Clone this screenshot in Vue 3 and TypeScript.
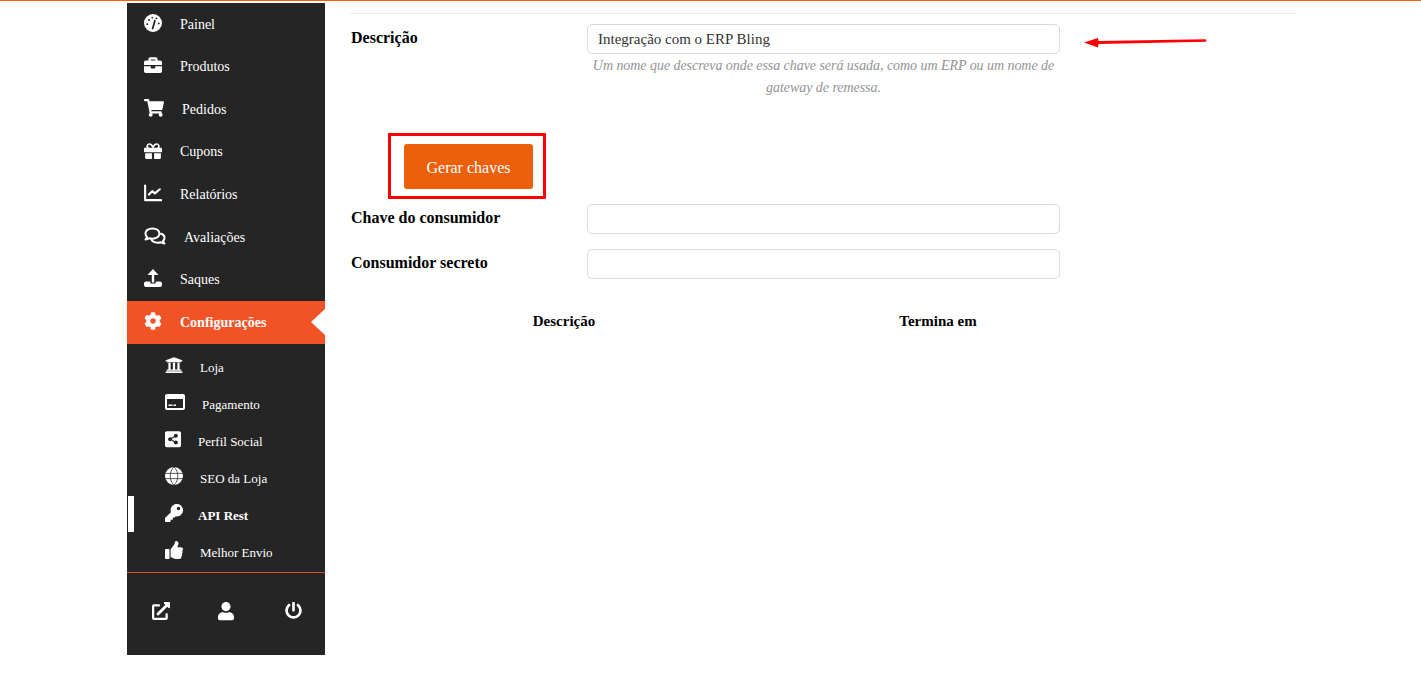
<script setup lang="ts">
interface Glyph {
  vb: string
  w: number
  d?: string
  cut?: string
  line?: string
}

interface NavItem {
  label: string
  shift?: number
  active?: boolean
  glyph: Glyph
}

const mainItems: NavItem[] = [
  {
    label: 'Painel',
    glyph: {
      vb: '0 0 24 24',
      w: 18,
      d: 'M12 0a12 12 0 1 0 0 24a12 12 0 1 0 0-24z',
      cut: 'M11.500 19.500L14.500 9M4.400 13.600h.1M6.600 8h.1M11 4.800h.1M16.400 5.800h.1M19.600 12.600h.1',
    },
  },
  {
    label: 'Produtos',
    glyph: {
      vb: '0 0 512 512',
      w: 18,
      d: 'M320 336c0 8.840-7.160 16-16 16h-96c-8.840 0-16-7.160-16-16v-48H0v144c0 25.600 22.400 48 48 48h416c25.600 0 48-22.400 48-48V288H320v48zm144-208h-80V80c0-25.600-22.400-48-48-48H176c-25.600 0-48 22.400-48 48v48H48c-25.600 0-48 22.400-48 48v80h512v-80c0-25.600-22.400-48-48-48zm-144 0H192V96h128v32z',
    },
  },
  {
    label: 'Pedidos',
    shift: 2,
    glyph: {
      vb: '0 0 576 512',
      w: 20,
      d: 'M528.120 301.319l47.273-208C578.806 78.301 567.391 64 551.990 64H159.208l-9.166-44.810C147.758 8.021 137.930 0 126.529 0H24C10.745 0 0 10.745 0 24v16c0 13.255 10.745 24 24 24h69.883l70.248 343.435C147.325 417.100 136 435.222 136 456c0 30.928 25.072 56 56 56s56-25.072 56-56c0-15.674-6.447-29.835-16.824-40h209.647C430.447 426.165 424 440.326 424 456c0 30.928 25.072 56 56 56s56-25.072 56-56c0-22.172-12.888-41.332-31.579-50.405l5.517-24.276c3.413-15.018-8.002-29.319-23.403-29.319H218.117l-6.545-32h293.145c11.206 0 20.920-7.754 23.403-18.681z',
    },
  },
  {
    label: 'Cupons',
    glyph: {
      vb: '0 0 512 512',
      w: 18,
      d: 'M32 448c0 17.700 14.300 32 32 32h160V320H32v128zm256 32h160c17.700 0 32-14.300 32-32V320H288v160zm192-320h-42.100c6.200-12.100 10.100-25.500 10.100-40 0-48.500-39.500-88-88-88-41.600 0-68.500 21.300-103 68.300-34.500-47-61.400-68.300-103-68.300-48.500 0-88 39.500-88 88 0 14.500 3.800 27.900 10.100 40H32c-17.700 0-32 14.300-32 32v80c0 8.800 7.200 16 16 16h480c8.800 0 16-7.200 16-16v-80c0-17.700-14.300-32-32-32zm-326.100 0c-22.100 0-40-17.900-40-40s17.900-40 40-40c19.900 0 34.600 3.300 86.100 80h-86.100zm206.100 0h-86.100c51.400-76.500 65.700-80 86.100-80 22.100 0 40 17.900 40 40s-17.900 40-40 40z',
    },
  },
  {
    label: 'Relatórios',
    glyph: {
      vb: '0 0 24 24',
      w: 18,
      line: 'M1.500 2v19.500H23M6.500 14l4.500-4.500 3.500 3L21 7',
    },
  },
  {
    label: 'Avaliações',
    shift: 4,
    glyph: {
      vb: '0 0 30 24',
      w: 22,
      line: 'M11.500 2C6 2 2 5 2 9c0 1.800.8 3.400 2.100 4.700-.3 1.300-1 2.400-2 3.300 1.900-.1 3.600-.8 4.800-1.700 1.400.5 3 .7 4.600.7 5.500 0 9.500-3 9.500-7S17 2 11.500 2zM23.500 9.200c2.800 1 4.500 3 4.500 5.500 0 1.700-.8 3.200-2.100 4.400.2 1.300.9 2.500 1.900 3.400-1.900-.1-3.600-.8-4.800-1.700-1.400.5-3 .7-4.600.7-3.300 0-6-1.100-7.600-2.900',
    },
  },
  {
    label: 'Saques',
    glyph: {
      vb: '0 0 18 18',
      w: 18,
      d: 'M9 0l5.500 6h-4.300v7.500H7.800V6H3.500zM2 12.500h4.200v1c0 .6.5 1.100 1.100 1.100h3.400c.6 0 1.100-.5 1.100-1.100v-1H16c1.100 0 2 .9 2 2V16c0 1.100-.9 2-2 2H2c-1.100 0-2-.9-2-2v-1.500c0-1.100.9-2 2-2z',
    },
  },
  {
    label: 'Configurações',
    active: true,
    glyph: {
      vb: '0 0 512 512',
      w: 18,
      d: 'M487.400 315.700l-42.600-24.600c4.300-23.200 4.300-47 0-70.200l42.600-24.600c4.900-2.800 7.100-8.600 5.500-14-11.100-35.600-30-67.800-54.700-94.600-3.800-4.100-10-5.100-14.800-2.300L380.800 110c-17.900-15.400-38.500-27.300-60.800-35.100V25.800c0-5.600-3.900-10.500-9.400-11.700-36.700-8.200-74.300-7.800-109.200 0-5.500 1.200-9.400 6.100-9.400 11.700V75c-22.200 7.900-42.800 19.800-60.800 35.100L88.700 85.500c-4.900-2.800-11-1.900-14.800 2.300-24.700 26.700-43.600 58.900-54.700 94.600-1.700 5.400.6 11.200 5.500 14L67.300 221c-4.300 23.200-4.300 47 0 70.200l-42.600 24.600c-4.900 2.800-7.100 8.600-5.500 14 11.100 35.600 30 67.800 54.700 94.600 3.800 4.100 10 5.100 14.800 2.300l42.600-24.600c17.900 15.400 38.500 27.300 60.800 35.100v49.200c0 5.600 3.900 10.500 9.400 11.700 36.700 8.200 74.300 7.800 109.200 0 5.500-1.200 9.400-6.100 9.400-11.700v-49.200c22.200-7.900 42.800-19.800 60.800-35.100l42.600 24.600c4.900 2.800 11 1.900 14.800-2.300 24.700-26.700 43.600-58.900 54.700-94.600 1.500-5.500-.7-11.300-5.600-14.100zM256 336c-44.100 0-80-35.900-80-80s35.900-80 80-80 80 35.900 80 80-35.900 80-80 80z',
    },
  },
]

const subItems: NavItem[] = [
  {
    label: 'Loja',
    shift: 2,
    glyph: {
      vb: '0 0 512 512',
      w: 18,
      d: 'M496 128v16a8 8 0 0 1-8 8h-24v12c0 6.627-5.373 12-12 12H60c-6.627 0-12-5.373-12-12v-12H24a8 8 0 0 1-8-8v-16a8 8 0 0 1 4.941-7.392l232-88a7.996 7.996 0 0 1 6.118 0l232 88A8 8 0 0 1 496 128zm-24 304H40c-13.255 0-24 10.745-24 24v16a8 8 0 0 0 8 8h464a8 8 0 0 0 8-8v-16c0-13.255-10.745-24-24-24zM96 192v192H60c-6.627 0-12 5.373-12 12v20h416v-20c0-6.627-5.373-12-12-12h-36V192h-64v192h-64V192h-64v192h-64V192H96z',
    },
  },
  {
    label: 'Pagamento',
    shift: 4,
    glyph: {
      vb: '2 4 20 16',
      w: 20,
      d: 'M20 4H4c-1.110 0-2 .890-2 2v12c0 1.110.890 2 2 2h16c1.110 0 2-.890 2-2V6c0-1.110-.890-2-2-2zm0 14H4V9h16v9zM5.500 14.500h4v1.500h-4zM10.500 14.500h2.500v1.500h-2.500z',
    },
  },
  {
    label: 'Perfil Social',
    glyph: {
      vb: '0 0 448 512',
      w: 16,
      d: 'M448 80v352c0 26.510-21.490 48-48 48H48c-26.510 0-48-21.490-48-48V80c0-26.510 21.490-48 48-48h352c26.510 0 48 21.490 48 48zM304 296c-14.562 0-27.823 5.561-37.783 14.671l-67.958-40.775a56.339 56.339 0 0 0 0-27.793l67.958-40.775C276.177 210.439 289.438 216 304 216c30.928 0 56-25.072 56-56s-25.072-56-56-56-56 25.072-56 56c0 4.797.605 9.453 1.740 13.897l-67.958 40.775C171.823 205.561 158.562 200 144 200c-30.928 0-56 25.072-56 56s25.072 56 56 56c14.562 0 27.823-5.561 37.783-14.671l67.958 40.775a56.088 56.088 0 0 0-1.740 13.897c0 30.928 25.072 56 56 56s56-25.072 56-56C360 321.072 334.928 296 304 296z',
    },
  },
  {
    label: 'SEO da Loja',
    shift: 2,
    glyph: {
      vb: '0 0 24 24',
      w: 18,
      d: 'M12 0a12 12 0 1 0 0 24a12 12 0 1 0 0-24z',
      cut: 'M0 8.500h24M0 15.500h24M12 0c-3.500 3-5 7.500-5 12s1.500 9 5 12M12 0c3.500 3 5 7.500 5 12s-1.500 9-5 12',
    },
  },
  {
    label: 'API Rest',
    active: true,
    glyph: {
      vb: '0 0 512 512',
      w: 18,
      d: 'M512 176.001C512 273.203 433.202 352 336 352c-11.220 0-22.190-1.062-32.827-3.069l-24.012 27.014A23.999 23.999 0 0 1 261.223 384H224v40c0 13.255-10.745 24-24 24h-40v40c0 13.255-10.745 24-24 24H24c-13.255 0-24-10.745-24-24v-78.059c0-6.365 2.529-12.470 7.029-16.971l161.802-161.802C163.108 213.814 160 195.271 160 176 160 78.798 238.797.001 335.999 0 433.488-.001 512 78.511 512 176.001zM336 128c0 26.510 21.490 48 48 48s48-21.490 48-48-21.490-48-48-48-48 21.490-48 48z',
    },
  },
  {
    label: 'Melhor Envio',
    shift: 2,
    glyph: {
      vb: '0 0 512 512',
      w: 18,
      d: 'M104 224H24c-13.255 0-24 10.745-24 24v240c0 13.255 10.745 24 24 24h80c13.255 0 24-10.745 24-24V248c0-13.255-10.745-24-24-24zM384 81.452c0 42.416-25.970 66.208-33.277 94.548h101.723c33.397 0 59.397 27.746 59.553 58.098.084 17.938-7.546 37.249-19.439 49.197l-.110.110c9.836 23.337 8.237 56.037-9.308 79.469 8.681 25.895-.069 57.704-16.382 74.757 4.298 17.598 2.244 32.575-6.148 44.632C440.202 511.587 389.616 512 346.839 512l-2.845-.001c-48.287-.017-87.806-17.598-119.560-31.725-15.957-7.099-36.821-15.887-52.651-16.178-6.540-.120-11.783-5.457-11.783-11.998v-213.770c0-3.200 1.282-6.271 3.558-8.521 39.614-39.144 56.648-80.587 89.117-113.111 14.804-14.832 20.188-37.236 25.393-58.902C282.515 39.293 291.817 0 312 0c24 0 72 8 72 81.452z',
    },
  },
]

const footerIcons: Glyph[] = [
  {
    vb: '0 0 512 512',
    w: 18,
    d: 'M432 320H400a16 16 0 0 0-16 16V448H64V128H208a16 16 0 0 0 16-16V80a16 16 0 0 0-16-16H48A48 48 0 0 0 0 112V464a48 48 0 0 0 48 48H400a48 48 0 0 0 48-48V336A16 16 0 0 0 432 320ZM488 0h-128c-21.370 0-32.050 25.910-17 41l35.730 35.730L135 320.370a24 24 0 0 0 0 34L157.670 377a24 24 0 0 0 34 0L435.280 133.320 471 169c15 15 41 4.500 41-17V24A24 24 0 0 0 488 0Z',
  },
  {
    vb: '0 0 448 512',
    w: 16,
    d: 'M224 256c70.700 0 128-57.300 128-128S294.700 0 224 0 96 57.300 96 128s57.300 128 128 128zm89.600 32h-16.700c-22.200 10.200-46.900 16-72.900 16s-50.600-5.800-72.900-16h-16.700C60.200 288 0 348.200 0 422.400V464c0 26.500 21.500 48 48 48h352c26.500 0 48-21.500 48-48v-41.600c0-74.200-60.200-134.400-134.400-134.400z',
  },
  {
    vb: '0 0 512 512',
    w: 17,
    d: 'M400 54.100c63 45 104 118.600 104 201.900 0 136.800-110.800 247.700-247.500 248C120 504.300 8.200 393 8 256.400 7.900 173.100 48.900 99.300 111.800 54.200c11.700-8.300 28-4.800 35 7.700L162.600 90c5.900 10.500 3.100 23.800-6.600 31-41.500 30.800-68 79.600-68 134.900-.1 92.300 74.500 168.100 168 168.100 91.600 0 168.600-74.200 168-169.100-.3-51.800-24.700-101.800-68.100-134-9.700-7.200-12.400-20.500-6.400-30.900l15.800-28.100c7-12.400 23.200-16.100 34.800-7.900zM296 264V24c0-13.300-10.700-24-24-24h-32c-13.300 0-24 10.700-24 24v240c0 13.300 10.700 24 24 24h32c13.300 0 24-10.700 24-24z',
  },
]
</script>

<template>
  <div class="top-line"></div>
  <div class="page">
    <aside class="sidebar">
      <nav>
        <a
          v-for="item in mainItems"
          :key="item.label"
          class="nav-item"
          :class="{ active: item.active }"
        >
          <span class="icon-cell">
            <svg :viewBox="item.glyph.vb" :width="item.glyph.w">
              <path v-if="item.glyph.d" :d="item.glyph.d" class="fill" />
              <path v-if="item.glyph.line" :d="item.glyph.line" class="line" />
              <path v-if="item.glyph.cut" :d="item.glyph.cut" class="cut" />
            </svg>
          </span>
          <span class="text" :style="{ paddingLeft: (item.shift || 0) + 'px' }">{{ item.label }}</span>
        </a>
      </nav>

      <div class="submenu">
        <a
          v-for="item in subItems"
          :key="item.label"
          class="sub-item"
          :class="{ current: item.active }"
        >
          <span class="icon-cell">
            <svg :viewBox="item.glyph.vb" :width="item.glyph.w">
              <path v-if="item.glyph.d" :d="item.glyph.d" class="fill" />
              <path v-if="item.glyph.cut" :d="item.glyph.cut" class="cut thin" />
            </svg>
          </span>
          <span class="text" :style="{ paddingLeft: (item.shift || 0) + 'px' }">{{ item.label }}</span>
        </a>
      </div>

      <div class="side-footer">
        <a v-for="icon in footerIcons" :key="icon.d">
          <svg :viewBox="icon.vb" :width="icon.w"><path :d="icon.d" class="fill" /></svg>
        </a>
      </div>
    </aside>

    <main class="content">
      <hr class="rule" />

      <div class="field first">
        <label>Descrição</label>
        <div class="control">
          <input type="text" value="Integração com o ERP Bling" />
          <p class="help">Um nome que descreva onde essa chave será usada, como um ERP ou um nome de gateway de remessa.</p>
        </div>
        <svg class="arrow" width="124" height="12" viewBox="0 0 124 12">
          <path d="M0 5.500L14 1l.5 3L121 2.200a1.300 1.300 0 0 1 .1 2.600L14.500 7l-.5 3.500z" fill="#f00" />
        </svg>
      </div>

      <div class="button-mark">
        <button type="button">Gerar chaves</button>
      </div>

      <div class="field">
        <label>Chave do consumidor</label>
        <div class="control"><input type="text" /></div>
      </div>
      <div class="field">
        <label>Consumidor secreto</label>
        <div class="control"><input type="text" /></div>
      </div>

      <div class="table-head">
        <span>Descrição</span>
        <span>Termina em</span>
      </div>
    </main>
  </div>
</template>

<style>
html,
body {
  margin: 0;
  background: #fff;
  overflow: hidden;
}
</style>

<style scoped>
.top-line {
  height: 1px;
  background: #f0620d;
  box-shadow: 0 2px 10px rgba(0, 0, 0, 0.06);
}

.page {
  display: flex;
  height: 675px;
  padding: 2px 0 0 127px;
  box-sizing: border-box;
  font-family: 'Liberation Serif', 'Times New Roman', serif;
}

.sidebar {
  width: 198px;
  height: 652px;
  flex: none;
  background: #252525;
  color: #fff;
}

.nav-item {
  display: flex;
  align-items: center;
  height: 42.6px;
  padding-left: 17px;
  font-size: 14px;
  position: relative;
}

.nav-item .text {
  padding-top: 0.6px;
}

.icon-cell {
  flex: none;
  display: flex;
  align-items: center;
  padding-bottom: 3px;
}

.nav-item .icon-cell {
  width: 36px;
}

.nav-item.active {
  background: #f15327;
  font-weight: 700;
}

.nav-item.active::after {
  content: '';
  position: absolute;
  right: 0;
  top: 50%;
  margin-top: -13px;
  border-top: 13px solid transparent;
  border-bottom: 13px solid transparent;
  border-right: 14px solid #fff;
}

svg {
  display: block;
}

.fill {
  fill: #fff;
}

.line {
  fill: none;
  stroke: #fff;
  stroke-width: 2.800;
  stroke-linecap: round;
  stroke-linejoin: round;
}

.cut {
  fill: none;
  stroke: #252525;
  stroke-width: 2.400;
  stroke-linecap: round;
}

.cut.thin {
  stroke-width: 1;
  stroke-linecap: butt;
}

.submenu {
  padding-top: 4.500px;
}

.sub-item {
  display: flex;
  align-items: center;
  height: 37px;
  padding-left: 38px;
  font-size: 13px;
  position: relative;
}

.sub-item .text {
  padding-top: 2px;
}

.sub-item .icon-cell {
  width: 33px;
}

.sub-item.current {
  font-weight: 700;
}

.sub-item.current::before {
  content: '';
  position: absolute;
  left: 1px;
  top: 0;
  width: 6px;
  height: 36px;
  background: #fff;
}

.side-footer {
  display: flex;
  gap: 48px;
  margin-top: 2px;
  padding: 29px 0 0 25px;
  border-top: 1px solid #d9512c;
}

.side-footer a:last-child {
  margin-left: 3px;
}

.content {
  width: 946px;
  margin-left: 25px;
  color: #000;
}

.rule {
  height: 1px;
  margin: 10px 0 10px;
  border: 0;
  background: #eaeaea;
}

.field {
  display: grid;
  grid-template-columns: 237px 473px;
  margin-bottom: 15px;
  position: relative;
}

.field.first {
  margin-bottom: 0;
}

.field label {
  padding-left: 1px;
  font-size: 16px;
  font-weight: 700;
  line-height: 28px;
}

input {
  display: block;
  width: 100%;
  height: 30px;
  box-sizing: border-box;
  padding: 0 10px;
  border: 1px solid #d8d8e0;
  border-radius: 5px;
  background: #fff;
  color: #333;
  font: 15px 'Liberation Serif', 'Times New Roman', serif;
  outline: none;
}

.help {
  margin: 0;
  padding-top: 1px;
  color: #939393;
  font-size: 14px;
  font-style: italic;
  line-height: 22px;
  letter-spacing: -0.05px;
  text-align: center;
}

.arrow {
  position: absolute;
  left: 734px;
  top: 13px;
}

.button-mark {
  width: 158px;
  height: 66px;
  margin: 34px 0 5px 38px;
  box-sizing: border-box;
  padding: 8px 0 0 13px;
  border: 3px solid #f00;
  border-radius: 1px;
}

button {
  display: block;
  width: 129px;
  height: 45px;
  padding: 2px 0 0;
  border: 0;
  border-radius: 3px;
  background: #ec600c;
  color: #fff;
  font: 16px 'Liberation Serif', 'Times New Roman', serif;
}

.table-head {
  display: grid;
  grid-template-columns: 374px 374px;
  margin: 34px 0 0 27px;
  font-size: 15px;
  font-weight: 700;
  text-align: center;
}
</style>
